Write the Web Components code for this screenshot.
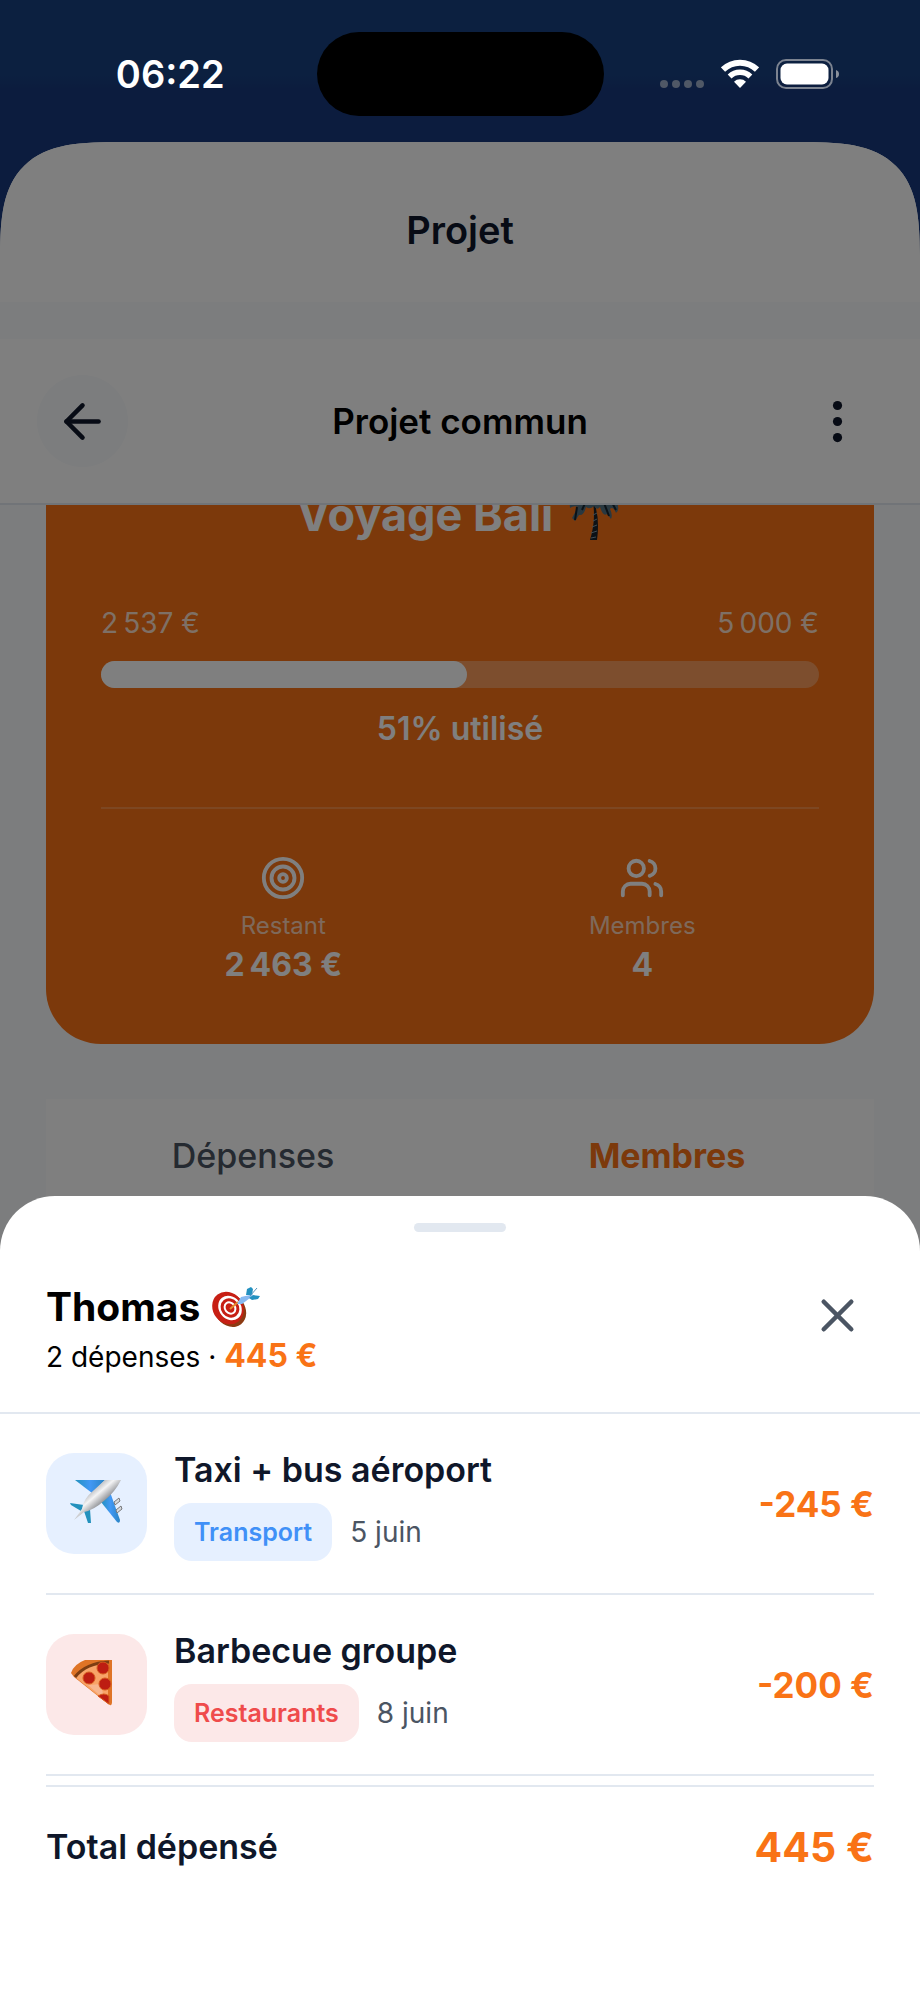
<!DOCTYPE html>
<html lang="fr">
<head>
<meta charset="utf-8">
<meta name="viewport" content="width=device-width, initial-scale=1">
<title>Projet commun</title>
<style>
  :root {
    --orange: #f97316; --ink: #0f172a; --muted: #4b5563;
    --line: #e2e8f0; --soft: #f8fafc;
  }
  body { margin: 0; font-family: Inter, "Noto Sans", sans-serif; color: var(--ink); }
</style>
</head>
<body>
<app-screen>
  <app-shell slot="app" heading="Projet">
    <tool-bar slot="bar" heading="Projet commun"></tool-bar>
    <budget-card heading="Voyage Bali" spent="2&#8239;537&nbsp;€" budget="5&#8239;000&nbsp;€" percent="51">
      <budget-stat label="Restant" value="2&#8239;463&nbsp;€">
        <svg width="46" height="46" viewBox="0 0 24 24" fill="none" stroke="currentColor" stroke-width="2" aria-hidden="true"><circle cx="12" cy="12" r="10"/><circle cx="12" cy="12" r="6"/><circle cx="12" cy="12" r="2"/></svg>
      </budget-stat>
      <budget-stat label="Membres" value="4">
        <svg width="46" height="46" viewBox="0 0 24 24" fill="none" stroke="currentColor" stroke-width="2" stroke-linecap="round" stroke-linejoin="round" aria-hidden="true"><path d="M16 21v-2a4 4 0 0 0-4-4H6a4 4 0 0 0-4 4v2"/><circle cx="9" cy="7" r="4"/><path d="M22 21v-2a4 4 0 0 0-3-3.87"/><path d="M16 3.13a4 4 0 0 1 0 7.75"/></svg>
      </budget-stat>
    </budget-card>
    <tab-bar></tab-bar>
  </app-shell>
  <status-bar slot="status" time="06:22"></status-bar>
  <member-sheet slot="sheet" name="Thomas" count="2 dépenses" total="445&nbsp;€">
    <expense-row role="listitem" heading="Taxi + bus aéroport" category="Transport" day="5 juin" amount="-245&nbsp;€" style="--tint:#e6f0ff;--accent:#4090f7">
      <svg width="53" height="50" viewBox="0 0 53 50" aria-hidden="true">
        <defs>
          <linearGradient id="hull" gradientUnits="userSpaceOnUse" x1="22" y1="10" x2="34" y2="24"><stop offset="0" stop-color="#b4b6ba"/><stop offset=".4" stop-color="#f4f4f5"/><stop offset="1" stop-color="#85878c"/></linearGradient>
          <linearGradient id="wing" x1="0" y1="0" x2="1" y2="0"><stop offset="0" stop-color="#2391bd"/><stop offset=".5" stop-color="#4298f5"/><stop offset="1" stop-color="#2a84c4"/></linearGradient>
        </defs>
        <path d="M5 1H35L22 14Z" fill="url(#wing)"/>
        <path d="M40 13L50 41Q50 45 47 43L31 23Z" fill="url(#wing)"/>
        <path d="M44 23l5-4 1 3-5 4zM46 31l5-4 1 3-5 4z" fill="#d7dade" stroke="#77797d" stroke-width="1"/>
        <path d="M0 24l14 2-3 6-10-6zM14 32l6-2 1 14h-3z" fill="#2391bd"/>
        <path d="M35 1H51Q45 13 35 21Q24 31 14 33L4 41L12 30Q13 20 24 11Z" fill="url(#hull)"/>
      </svg>
    </expense-row>
    <expense-row role="listitem" heading="Barbecue groupe" category="Restaurants" day="8 juin" amount="-200&nbsp;€" style="--tint:#fce8e8;--accent:#ef4b4b">
      <svg width="53" height="50" viewBox="0 0 53 50" aria-hidden="true">
        <path d="M1 13Q4 4 15 0H42V42Q42 47 38 44L4 17Z" fill="#df7426"/>
        <path d="M5 17Q15 3 38 2V41L36 42Z" fill="#f8a468"/>
        <path d="M5 17Q16 3 39 2" fill="none" stroke="#7d3d12" stroke-width="3"/>
        <path d="M11 19l23 20-3-15-11 1z" fill="#f7b68f"/>
        <g fill="#bd1d12" stroke="#d65a1d" stroke-width="1"><circle cx="33" cy="8" r="6"/><circle cx="19" cy="18" r="6"/><circle cx="35" cy="24" r="6"/><path d="M28 36q6-4 11 0v8z"/></g>
      </svg>
    </expense-row>
  </member-sheet>
</app-screen>

<script>
const reset = `*{box-sizing:border-box}button{font:inherit;color:inherit;background:none;border:0;padding:0;margin:0}h1,h2,h3,p{margin:0}svg{display:block}`;

function define(name, render) {
  customElements.define(name, class extends HTMLElement {
    connectedCallback() {
      if (this.shadowRoot) return;
      const template = document.createElement('template');
      template.innerHTML = render(key => this.getAttribute(key) || '');
      this.attachShadow({ mode: 'open' }).append(template.content.cloneNode(true));
    }
  });
}

define('app-screen', () => `<style>${reset}
  :host{display:grid;min-height:100vh}
  .app,.scrim,.front{grid-area:1/1}
  .app{display:grid}
  .scrim{background:rgba(0,0,0,.5);z-index:1}
  .front{z-index:2;display:flex;flex-direction:column;justify-content:space-between}
</style>
<div class="app"><slot name="app"></slot></div>
<div class="scrim"></div>
<div class="front"><slot name="status"></slot><slot name="sheet"></slot></div>`);

define('status-bar', a => `<style>${reset}
  :host{display:grid;grid-template-columns:1fr auto 1fr;align-items:center;padding-top:32px;color:#fff}
  .island{width:287px;height:84px;border-radius:42px;background:#000}
  .time{padding-left:24px;text-align:center;font-size:38px;line-height:48px;font-weight:600}
  .signs{display:flex;align-items:center;justify-content:center;gap:17px;padding-right:24px}
</style>
<div class="time">${a('time')}</div>
<div class="island"></div>
<div class="signs">
  <svg width="44" height="32" viewBox="0 0 44 32" fill="#505866" aria-label="Réseau"><circle cx="4" cy="26" r="4"/><circle cx="16" cy="26" r="4"/><circle cx="28" cy="26" r="4"/><circle cx="40" cy="26" r="4"/></svg>
  <svg width="38" height="32" viewBox="0 0 38 32" fill="none" stroke="#fff" aria-label="Wi-Fi"><path d="M2 11.5A24.5 24.5 0 0 1 36 11.5" stroke-width="6"/><path d="M8.6 18.4A15 15 0 0 1 29.4 18.4" stroke-width="5.5"/><path d="M19 30l-6-6.2a8.5 8.5 0 0 1 12 0z" fill="#fff" stroke="none"/></svg>
  <svg width="63" height="32" viewBox="0 0 63 32" aria-label="Batterie"><rect x="1" y="2" width="55" height="28" rx="9" fill="none" stroke="#7c8390" stroke-width="2"/><rect x="4.5" y="5.5" width="48" height="21" rx="6.5" fill="#fff"/><path d="M60 12q3 1 3 4t-3 4z" fill="#8b919c"/></svg>
</div>`);

define('app-shell', a => `<style>${reset}
  :host{display:block;padding-top:142px;background:linear-gradient(#184080 0,#184080 76px,#18387c 90px,#18387c 300px,var(--soft) 300px)}
  .page{background:var(--soft);border-radius:86px 86px 0 0;overflow:hidden}
  @supports (corner-shape: superellipse(1.7)) {
    .page{border-radius:125px 125px 0 0;corner-shape:superellipse(1.7)}
  }
  header{background:#fff;padding:64px 0 48px;text-align:center}
  h1{font-size:38px;line-height:48px;font-weight:600}
  .view{margin-top:37px}
  .scroll{overflow:hidden;padding:0 46px}
</style>
<div class="page">
  <header><h1>${a('heading')}</h1></header>
  <div class="view"><slot name="bar"></slot><div class="scroll"><slot></slot></div></div>
</div>`);

define('tool-bar', a => `<style>${reset}
  :host{display:flex;align-items:center;justify-content:space-between;padding:36px 37px;background:#fff;border-bottom:2px solid var(--line)}
  button{width:91px;height:92px;display:grid;place-items:center;border-radius:50%}
  .back{background:var(--soft)}
  h2{font-size:35px;line-height:48px;font-weight:600;color:#000}
</style>
<button class="back" aria-label="Retour"><svg width="55" height="55" viewBox="0 0 24 24" fill="none" stroke="currentColor" stroke-width="2" stroke-linecap="round" stroke-linejoin="round"><path d="m12 19-7-7 7-7"/><path d="M19 12H5"/></svg></button>
<h2>${a('heading')}</h2>
<button aria-label="Plus d’options"><svg width="55" height="55" viewBox="0 0 24 24" fill="currentColor"><circle cx="12" cy="5" r="2"/><circle cx="12" cy="12" r="2"/><circle cx="12" cy="19" r="2"/></svg></button>`);

define('budget-card', a => `<style>${reset}
  :host{display:block;margin-top:-78px;padding:60px 55px;border-radius:55px;background:var(--orange);color:#fff}
  h2{display:flex;align-items:center;justify-content:center;gap:16px;font-size:45px;line-height:56px;font-weight:700}
  .amounts{display:flex;justify-content:space-between;margin-top:63px;font-size:28px;line-height:34px;color:rgba(255,255,255,.8)}
  .track{height:27px;margin-top:21px;border-radius:14px;background:rgba(255,255,255,.3)}
  .fill{width:${a('percent')}%;height:100%;border-radius:14px;background:#fff}
  p{margin-top:22px;text-align:center;font-size:32px;line-height:38px;font-weight:600}
  .stats{display:flex;justify-content:space-around;margin-top:59px;padding-top:46px;border-top:2px solid rgba(255,255,255,.2)}
</style>
<h2>${a('heading')}
  <svg width="54" height="54" viewBox="0 0 54 54" role="img" aria-label="palmier">
    <path d="M25 14q6 16 3 38l-7 0q6-20 3-37z" fill="#18222c"/>
    <path d="M22 50l5-1M22 45l6-2M23 39l5-2M24 33l4-2M24 27l4-2" stroke="#8298a4" stroke-width="1"/>
    <path d="M25 16Q17 2 4 8Q0 14 1 20Q5 17 9 19L3 30L6 33L10 27Q15 28 17 19Q21 22 25 18Q28 23 31 19Q34 29 38 26L42 31Q44 27 41 21Q44 18 47 25Q50 23 49 18Q47 4 37 5Q29 5 25 16Z" fill="#527080"/>
    <path d="M6 32l2-13M13 22l5-11M40 28l-5-13M47 22l-6-11" stroke="#17242e" stroke-width="2"/>
  </svg>
</h2>
<div class="amounts"><span>${a('spent')}</span><span>${a('budget')}</span></div>
<div class="track" role="progressbar" aria-valuenow="${a('percent')}" aria-label="Budget utilisé"><div class="fill"></div></div>
<p>${a('percent')}% utilisé</p>
<div class="stats"><slot></slot></div>`);

define('budget-stat', a => `<style>${reset}
  :host{display:flex;flex-direction:column;align-items:center}
  ::slotted(svg){display:block}
  .label{margin-top:10px;font-size:24px;line-height:30px;color:rgba(255,255,255,.7)}
  .value{margin-top:5px;font-size:32px;line-height:38px;font-weight:700}
</style>
<slot></slot><span class="label">${a('label')}</span><span class="value">${a('value')}</span>`);

define('tab-bar', () => `<style>${reset}
  :host{display:grid;grid-template-columns:1fr 1fr;margin-top:55px;background:#fff}
  button{padding:33px 0;font-size:34px;line-height:48px;font-weight:500;color:var(--muted)}
  button[aria-selected=true]{font-weight:700;color:var(--orange)}
</style>
<button role="tab" aria-selected="false">Dépenses</button><button role="tab" aria-selected="true">Membres</button>`);

define('member-sheet', a => `<style>${reset}
  :host{display:block;padding:27px 0 129px;background:#fff;border-radius:55px 55px 0 0}
  .handle{width:92px;height:9px;margin:0 auto;border-radius:5px;background:var(--line)}
  header{display:flex;align-items:flex-start;justify-content:space-between;padding:46px 46px 34px;border-bottom:2px solid var(--line);color:#000}
  h2{display:flex;align-items:center;gap:12px;font-size:39px;line-height:58px;font-weight:700}
  p{font-size:28px;line-height:42px}
  strong{font-size:32px;line-height:1;font-weight:700;color:var(--orange)}
  button{width:73px;height:74px;display:grid;place-items:center;color:var(--muted)}
  .body{padding:0 46px}
  .total{display:flex;align-items:center;justify-content:space-between;margin-top:9px;padding-top:36px;border-top:2px solid var(--line);font-size:34px;line-height:48px;font-weight:600}
  .total strong{font-size:41px}
</style>
<div class="handle"></div>
<header>
  <div>
    <h2>${a('name')}
      <svg width="48" height="42" viewBox="0 0 48 42" role="img" aria-label="cible">
        <ellipse cx="18" cy="24" rx="15" ry="18" transform="rotate(-38 18 24)" fill="#8c3a12"/>
        <ellipse cx="16" cy="22" rx="15" ry="17" transform="rotate(-38 16 22)" fill="#c71f14"/>
        <ellipse cx="18" cy="22" rx="11" ry="13" transform="rotate(-38 18 22)" fill="#fff"/>
        <ellipse cx="18" cy="22" rx="9" ry="10" transform="rotate(-38 18 22)" fill="#c71f14"/>
        <ellipse cx="18" cy="22" rx="6" ry="7" transform="rotate(-38 18 22)" fill="#fff"/>
        <ellipse cx="18" cy="22" rx="4" ry="5" transform="rotate(-38 18 22)" fill="#c71f14"/>
        <path d="M18 23l8-7" stroke="#e58b2c" stroke-width="2"/>
        <path d="M25 18l4-7 9-2 3-1-3 4-8 6z" fill="#86b8f0"/>
        <path d="M34 9l1-6 4-2 2 2-1 6zM37 12l4-3 7 1-2 3-6 1z" fill="#2391c0"/>
        <path d="M38 10l7-8" stroke="#5794bb" stroke-width="1"/>
      </svg>
    </h2>
    <p>${a('count')} · <strong>${a('total')}</strong></p>
  </div>
  <button aria-label="Fermer"><svg width="55" height="55" viewBox="0 0 24 24" fill="none" stroke="currentColor" stroke-width="2" stroke-linecap="round"><path d="M18 6 6 18"/><path d="m6 6 12 12"/></svg></button>
</header>
<div class="body">
  <div role="list"><slot></slot></div>
  <div class="total"><span>Total dépensé</span><strong>${a('total')}</strong></div>
</div>`);

define('expense-row', a => `<style>${reset}
  :host{display:flex;align-items:center;padding:32px 0;border-bottom:2px solid var(--line)}
  .icon{width:101px;height:101px;flex:none;display:grid;place-items:center;border-radius:28px;background:var(--tint)}
  .text{flex:1;margin-left:27px}
  h3{font-size:34px;line-height:48px;font-weight:600}
  .meta{display:flex;align-items:center;gap:18px;margin-top:9px;font-size:28px;color:var(--muted)}
  .chip{padding:12px 20px;border-radius:18px;background:var(--tint);color:var(--accent);font-size:25px;line-height:34px;font-weight:600}
  .amount{font-size:35px;line-height:48px;font-weight:700;color:var(--orange)}
</style>
<div class="icon"><slot></slot></div>
<div class="text"><h3>${a('heading')}</h3><div class="meta"><span class="chip">${a('category')}</span><span>${a('day')}</span></div></div>
<span class="amount">${a('amount')}</span>`);
</script>
</body>
</html>
